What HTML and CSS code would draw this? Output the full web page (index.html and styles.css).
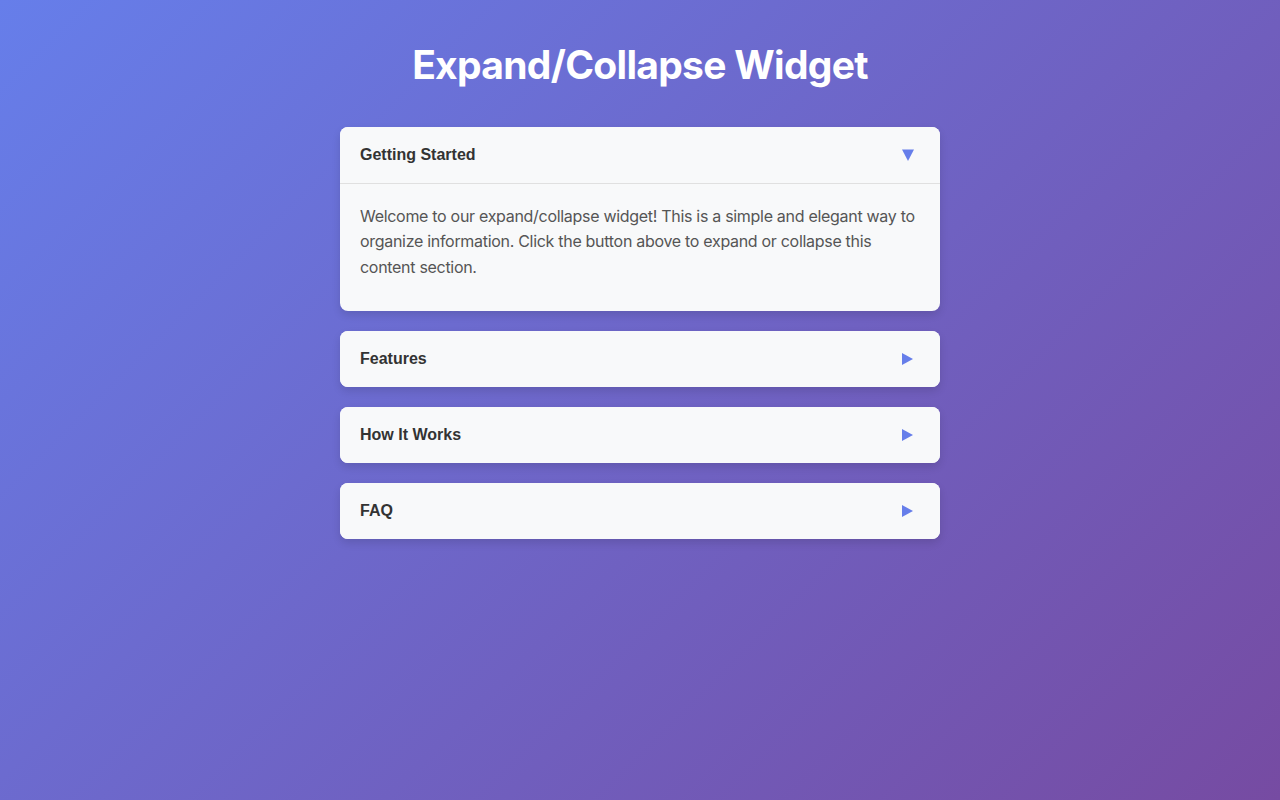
FILE: index.html
```html
<!DOCTYPE html>
<html lang="en">
<head>
<meta charset="UTF-8">
<title>Expand/Collapse Widget</title>
<link rel="stylesheet" href="styles.css">
</head>
<body>
<div class="container">
  <h1 class="title">Expand/Collapse Widget</h1>
  <div class="section">
    <button class="toggle"><span>Getting Started</span><svg class="arrow" width="12" height="12" viewBox="0 0 12 12"><path d="M0 0.5H12L6 12Z" fill="#667eea"/></svg></button>
    <div class="content">
      <p>Welcome to our expand/collapse widget! This is a simple and elegant way to organize information. Click the button above to expand or collapse this content section.</p>
    </div>
  </div>
  <div class="section">
    <button class="toggle collapsed"><span>Features</span><svg class="arrow" width="12" height="12" viewBox="0 0 12 12"><path d="M0 0L11 6L0 12Z" fill="#667eea"/></svg></button>
  </div>
  <div class="section">
    <button class="toggle collapsed"><span>How It Works</span><svg class="arrow" width="12" height="12" viewBox="0 0 12 12"><path d="M0 0L11 6L0 12Z" fill="#667eea"/></svg></button>
  </div>
  <div class="section">
    <button class="toggle collapsed"><span>FAQ</span><svg class="arrow" width="12" height="12" viewBox="0 0 12 12"><path d="M0 0L11 6L0 12Z" fill="#667eea"/></svg></button>
  </div>
</div>
</body>
</html>
```

FILE: styles.css
```css
html, body {
  margin: 0;
  padding: 0;
  min-height: 100%;
}
body {
  font-family: Inter, "Liberation Sans", sans-serif;
  background: linear-gradient(135deg, #667eea 0%, #764ba2 100%);
  min-height: 800px;
  padding: 20px;
  box-sizing: border-box;
}
.container {
  max-width: 600px;
  margin: 0 auto;
}
.title {
  color: #fff;
  text-align: center;
  font-size: 39px;
  font-weight: 700;
  letter-spacing: -0.7px;
  margin: 23px 0 39px;
  line-height: 1.15;
}
.section {
  background: #f8f9fa;
  border-radius: 8px;
  box-shadow: 0 4px 8px rgba(0, 0, 0, 0.12);
  margin-bottom: 20px;
  overflow: hidden;
}
.toggle {
  display: flex;
  justify-content: space-between;
  align-items: center;
  width: 100%;
  height: 56px;
  padding: 0 26px 0 20px;
  border: none;
  background: #f8f9fa;
  font-family: "Liberation Sans", Arial, sans-serif;
  font-size: 16px;
  font-weight: 700;
  color: #333;
  text-align: left;
  box-sizing: border-box;
}
.content {
  border-top: 1px solid #e0e0e0;
  padding: 20px 20px 30px;
}
.toggle .arrow {
  display: block;
  flex: none;
}
.content p {
  margin: 0;
  color: #555;
  font-size: 16px;
  line-height: 1.6;
  letter-spacing: -0.3px;
}
```
